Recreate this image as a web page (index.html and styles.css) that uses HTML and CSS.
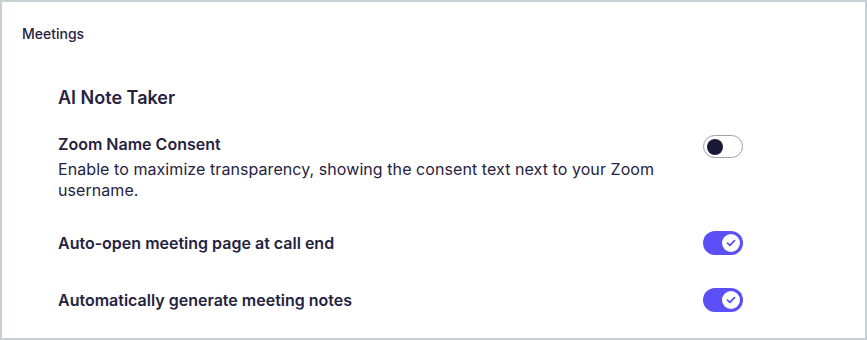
FILE: index.html
```html
<!DOCTYPE html>
<html>
<head>
<meta charset="utf-8">
<link rel="stylesheet" href="styles.css">
</head>
<body>
<div class="card">
  <div class="card-title">Meetings</div>
  <div class="section">
    <h2 class="section-title">AI Note Taker</h2>
    <div class="row row-desc">
      <div class="row-text">
        <div class="label">Zoom Name Consent</div>
        <div class="desc">Enable to maximize transparency, showing the consent text next to your Zoom username.</div>
      </div>
      <span class="toggle off"><span class="knob"></span></span>
    </div>
    <div class="row">
      <div class="row-text"><div class="label">Auto-open meeting page at call end</div></div>
      <span class="toggle on"><span class="knob"><svg width="10" height="8" viewBox="0 0 10 8"><path d="M1.5 4.2 L3.9 6.4 L8.5 1.6" fill="none" stroke="#5b4ff5" stroke-width="1.8" stroke-linecap="round" stroke-linejoin="round"/></svg></span></span>
    </div>
    <div class="row">
      <div class="row-text"><div class="label">Automatically generate meeting notes</div></div>
      <span class="toggle on"><span class="knob"><svg width="10" height="8" viewBox="0 0 10 8"><path d="M1.5 4.2 L3.9 6.4 L8.5 1.6" fill="none" stroke="#5b4ff5" stroke-width="1.8" stroke-linecap="round" stroke-linejoin="round"/></svg></span></span>
    </div>
  </div>
</div>
</body>
</html>
```
FILE: styles.css
```css
* { box-sizing: border-box; }
html, body { margin: 0; padding: 0; background: #fff; }
body {
  font-family: Inter, "Noto Sans", sans-serif;
  color: #25233f;
}
.card {
  width: 867px;
  height: 340px;
  border: 2px solid #c7d0d2;
  padding: 23px 0 0 20px;
}
.card-title {
  font-size: 14px;
  font-weight: 500;
  line-height: 18px;
}
.section {
  padding: 43px 0 0 36px;
  width: 721px;
}
.section-title {
  margin: 0 0 23px 0;
  font-size: 18px;
  font-weight: 600;
  line-height: 24px;
}
.row {
  display: flex;
  justify-content: space-between;
  align-items: center;
  margin-bottom: 33px;
}
.row-desc {
  align-items: flex-start;
  margin-bottom: 30px;
}
.row-text { width: 640px; }
.label {
  font-size: 16px;
  font-weight: 600;
  line-height: 22px;
}
.desc {
  font-size: 16px;
  font-weight: 400;
  line-height: 21px;
  margin-top: 4px;
  letter-spacing: 0.07px;
  color: #25233f;
}
.toggle {
  flex: none;
  width: 40px;
  height: 24px;
  border-radius: 12px;
  display: flex;
  align-items: center;
  padding: 0 3px;
}
.toggle.off {
  border: 1px solid #a09eae;
  background: #fff;
  margin-top: 2px;
  height: 23px;
  padding: 0 3px;
}
.toggle.off .knob {
  width: 16px;
  height: 16px;
  border-radius: 50%;
  background: #1a1838;
}
.toggle.on {
  background: #5b4ff5;
  justify-content: flex-end;
}
.toggle.on .knob {
  width: 18px;
  height: 18px;
  border-radius: 50%;
  background: #fff;
  display: flex;
  align-items: center;
  justify-content: center;
}
```
